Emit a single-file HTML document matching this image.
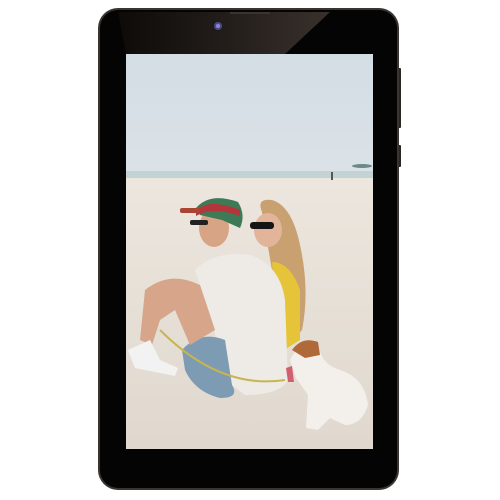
<!DOCTYPE html>
<html><head><meta charset="utf-8"><style>
html,body{margin:0;padding:0;background:#fff;width:500px;height:500px;overflow:hidden}
</style></head><body>
<svg width="500" height="500" viewBox="0 0 500 500" xmlns="http://www.w3.org/2000/svg">
<defs>
<linearGradient id="sky" x1="0" y1="0" x2="0" y2="1">
<stop offset="0" stop-color="#d3dde4"/><stop offset="0.6" stop-color="#e3e8ea"/><stop offset="1" stop-color="#eceeec"/></linearGradient>
<linearGradient id="sand" x1="0" y1="0" x2="0" y2="1">
<stop offset="0" stop-color="#ece6de"/><stop offset="1" stop-color="#e0d8ce"/></linearGradient>
<linearGradient id="glare" x1="0" y1="0" x2="1" y2="0">
<stop offset="0" stop-color="#0e0b09"/><stop offset="1" stop-color="#3e3530"/></linearGradient>
</defs>
<rect x="397" y="68" width="4" height="60" rx="1" fill="#2a2622"/>
<rect x="397" y="145" width="4" height="22" rx="1" fill="#2a2622"/>
<rect x="98" y="8" width="301" height="482" rx="20" fill="#3a3530"/>
<rect x="100" y="10" width="297" height="478" rx="18" fill="#050404"/>
<path d="M118 12 L330 12 L285 54 L126 54 Z" fill="url(#glare)" opacity="0.9"/>
<rect x="230" y="12" width="40" height="2" fill="#3a3430"/>
<circle cx="218" cy="26" r="4" fill="#4a4a8a"/><circle cx="218" cy="26" r="2" fill="#8a8ad0"/>
<rect x="126" y="54" width="247" height="395" fill="url(#sky)"/>
<rect x="126" y="171" width="247" height="7" fill="#c3d3d3"/>
<rect x="126" y="178" width="247" height="271" fill="url(#sand)"/>
<ellipse cx="362" cy="166" rx="10" ry="2" fill="#6a8a86"/>
<rect x="331" y="172" width="2" height="8" fill="#555"/>
<!-- woman -->
<path d="M262 212 Q256 198 272 200 Q292 206 300 245 Q310 290 302 330 L290 345 L282 310 L272 270 Z" fill="#c9a070"/>
<path d="M272 262 Q290 262 300 290 L300 340 L284 350 L275 300 Z" fill="#e5c43a"/>
<ellipse cx="268" cy="230" rx="14" ry="17" fill="#e2b59a"/>
<rect x="250" y="222" width="24" height="7" rx="3" fill="#151515"/>
<!-- man -->
<path d="M195 270 Q215 250 250 255 Q280 265 285 300 L288 380 Q280 395 245 395 L225 380 L212 320 Z" fill="#eeeae6"/>
<path d="M182 350 Q200 330 225 340 L232 385 Q240 398 220 398 Q195 392 185 370 Z" fill="#7e9bb4"/>
<path d="M145 290 Q170 270 200 285 L215 330 L190 345 L175 310 L160 320 L152 345 L140 340 Z" fill="#d6a58a"/>
<path d="M128 350 L150 340 L160 360 L178 368 L175 376 L135 368 Z" fill="#f2f2f2"/>
<ellipse cx="214" cy="228" rx="15" ry="19" fill="#d8a486"/>
<path d="M196 208 Q210 192 238 202 Q246 215 240 228 L222 220 L200 215 Z" fill="#3d7a55"/>
<path d="M196 210 Q210 198 240 210 L240 216 Q212 206 196 216 Z" fill="#b5353a"/>
<rect x="180" y="208" width="20" height="5" rx="2" fill="#a43"/>
<rect x="190" y="220" width="18" height="5" rx="2" fill="#222"/>
<path d="M160 330 Q220 390 285 380" stroke="#c8b550" stroke-width="2" fill="none"/>
<!-- dog -->
<path d="M290 360 Q300 340 318 345 Q322 365 340 370 Q365 378 368 405 Q362 425 345 425 L330 418 L318 430 L306 428 L308 395 L296 378 Z" fill="#f3f0ec"/>
<path d="M292 350 Q302 336 318 342 L320 355 L305 358 Z" fill="#b06a3a"/>
<path d="M286 368 L292 366 L294 382 L288 382 Z" fill="#d06070"/>
</svg>
</body></html>
